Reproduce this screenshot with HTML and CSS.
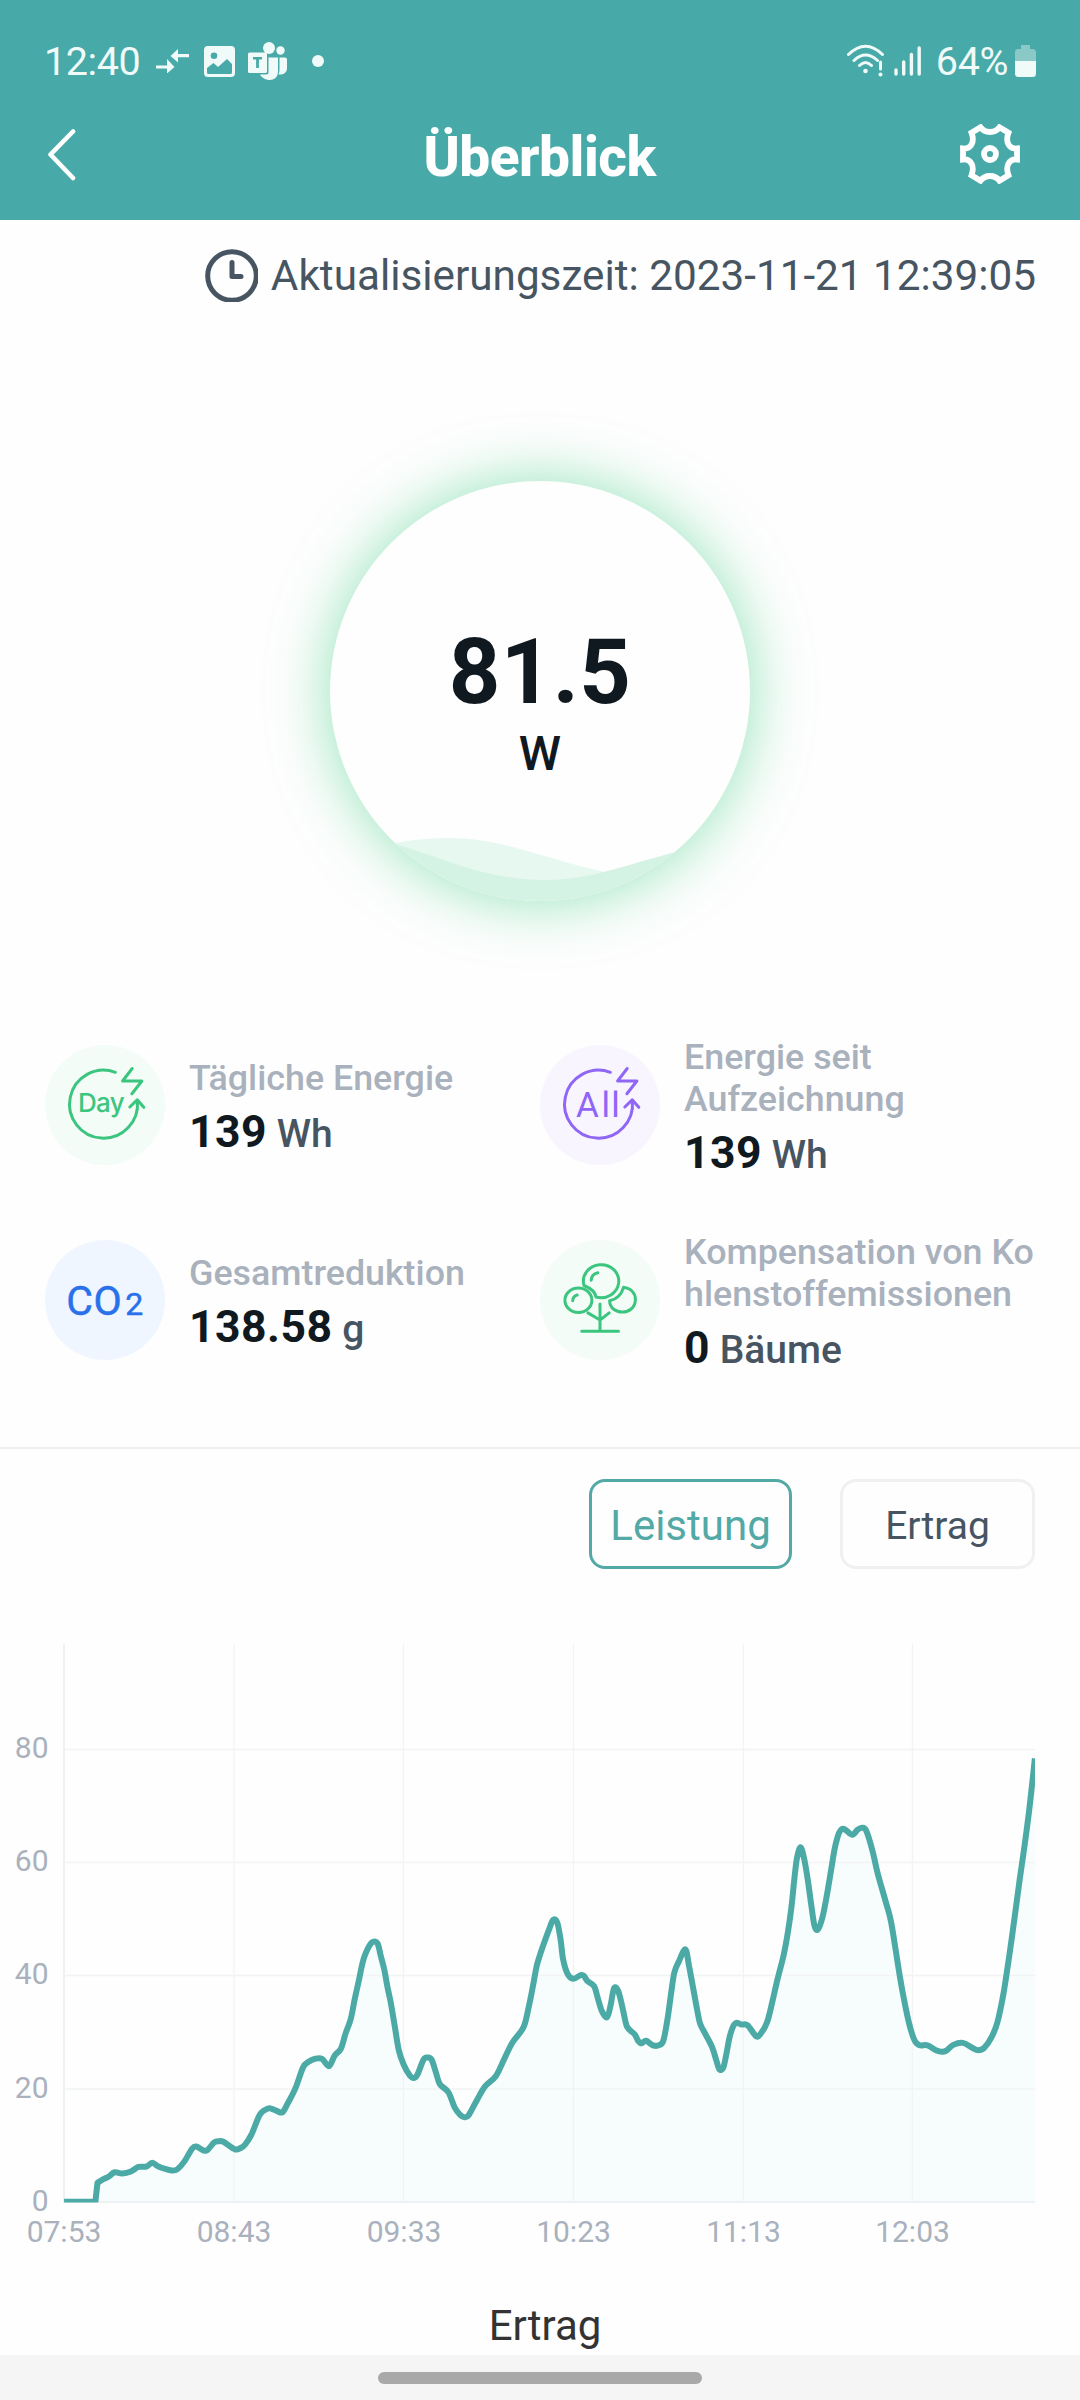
FILE: index.html
```html
<!DOCTYPE html>
<html lang="de">
<head>
<meta charset="utf-8">
<title>Überblick</title>
<link rel="stylesheet" href="styles.css">
</head>
<body>
<header class="header">
  <div class="status">
    <div class="status-left">
      <span class="clock">12:40</span>
      <svg class="i-arrows" width="33" height="24" viewBox="0 0 33 24"><path d="M0 16.500h11v-6.500l7.500 8-7.500 6.500v-5H0zM33 5H22v-5l-7.500 7 7.500 6.500V8.300h11z" fill="#effaf9"/></svg>
      <svg class="i-image" width="31" height="31" viewBox="0 0 31 31"><path fill-rule="evenodd" fill="#effaf9" d="M4 0h23a4 4 0 0 1 4 4v23a4 4 0 0 1-4 4H4a4 4 0 0 1-4-4V4a4 4 0 0 1 4-4zM10 6.500a3.300 3.300 0 1 0 0 6.600 3.300 3.300 0 0 0 0-6.600zM3 22v4.500q0 1.500 1.500 1.500h22q1.500 0 1.500-1.500V18l-5-5-9 8-4.500-4z"/></svg>
      <svg class="i-teams" width="40" height="38" viewBox="0 0 40 38"><g fill="#effaf9"><circle cx="21" cy="6" r="6"/><circle cx="32.500" cy="8.500" r="4.200"/><path d="M1.500 10.500h16a1.500 1.500 0 0 1 1.500 1.500v17.500a1.500 1.500 0 0 1-1.500 1.500h-16A1.500 1.500 0 0 1 0 29.500V12a1.500 1.500 0 0 1 1.500-1.500z"/><path d="M20.500 15.500H30v14c0 11-14 10.500-18 3h6.500a2 2 0 0 0 2-2zM31.500 15.500H37a2 2 0 0 1 2 2V26c0 5-4 7-8.500 6.500q1-2 1-5z"/></g><path d="M5 15h9v2.600h-3.100V26H8.100v-8.400H5z" fill="#48aaa8"/></svg>
      <svg class="i-dot" width="12" height="12"><circle cx="6" cy="6" r="6" fill="#effaf9"/></svg>
    </div>
    <div class="status-right">
      <svg class="i-wifi" width="37" height="34" viewBox="0 0 37 34"><g fill="none" stroke="#effaf9" stroke-width="3" stroke-linecap="round"><path d="M1.500 10.500Q18.500-6 35.500 10.500M7 16.500q11.500-11 23.500 0M12.500 21.500q6-6 12 0"/><path d="M33.500 18v7"/></g><circle cx="18.500" cy="27" r="2.300" fill="#effaf9"/><circle cx="33.500" cy="30.500" r="2" fill="#effaf9"/></svg>
      <svg class="i-signal" width="28" height="30" viewBox="0 0 28 30"><path d="M2 24v4M9.700 16v12M17.400 8.500V28M25.200 2v26" stroke="#effaf9" stroke-width="3.400" stroke-linecap="round"/></svg>
      <span class="clock">64%</span>
      <svg class="i-battery" width="21" height="32" viewBox="0 0 21 32"><path d="M6 0h9v4h2.500A3.500 3.500 0 0 1 21 7.500V16H0V7.500A3.500 3.500 0 0 1 3.500 4H6z" fill="#8bc9c7"/><path d="M0 16h21v12.500a3.500 3.500 0 0 1-3.500 3.500h-14A3.500 3.500 0 0 1 0 28.500z" fill="#effaf9"/></svg>
    </div>
  </div>
  <div class="appbar">
    <svg class="back" width="28" height="52" viewBox="0 0 28 52"><path d="M25 2.500 2.500 25.500 25 49" fill="none" stroke="#fff" stroke-width="4.600" stroke-linecap="round" stroke-linejoin="round"/></svg>
    <h1 class="title">Überblick</h1>
    <svg class="gear" width="60" height="60" viewBox="0 0 60 60"><g fill="none" stroke="#fff" stroke-width="5.800"><path d="M20.500 3.300Q24 8 30 8T39.500 3.300L48.500 8.800C45 18 49 25.500 57 24.500V35.500C49 34.500 45 42 48.500 51.200L39.500 56.700Q36 52 30 52T20.500 56.700L11.500 51.200C15 42 11 34.500 3 35.500V24.500C11 25.500 15 18 11.500 8.800Z"/><circle cx="30" cy="30" r="6"/></g></svg>
  </div>
</header>

<main>
  <div class="updated">
    <svg width="53" height="53" viewBox="0 0 53 53"><g fill="none" stroke="#475562"><circle cx="27" cy="27" r="24.300" stroke-width="5"/><path d="M27 13.500V27.500H36" stroke-width="5" stroke-linecap="round" stroke-linejoin="round"/></g></svg>
    <span>Aktualisierungszeit: 2023-11-21 12:39:05</span>
  </div>

  <section class="gauge">
    <svg class="waves" width="420" height="420" viewBox="0 0 420 420"><path d="M0 376C100 350 140 354 190 368S250 387 330 402V420H0z" fill="#e7f8f0"/><path d="M50 359C110 374 150 399 216 399C262 399 300 382 350 370V420H50z" fill="#d5f3e4"/></svg>
    <div class="power">81.5</div>
    <div class="power-unit">W</div>
  </section>

  <section class="stats">
    <div class="stat">
      <svg class="badge green" width="120" height="120" viewBox="0 0 120 120"><g class="line" stroke="#3bc57e"><path d="M70.400 27.300A34 34 0 1 0 92.400 56"/><path d="M84.800 62 92.200 54.800 98.800 62.300M87.200 23.500 77.600 36H96.900L86.900 48.700"/></g><text x="33" y="66.700" class="day">Day</text></svg>
      <div class="info"><div class="label">Tägliche Energie</div><div class="value"><b>139</b> Wh</div></div>
    </div>
    <div class="stat">
      <svg class="badge violet" width="120" height="120" viewBox="0 0 120 120"><g class="line" stroke="#8f66f6"><path d="M70.400 27.300A34 34 0 1 0 92.400 56"/><path d="M84.800 62 92.200 54.800 98.800 62.300M87.200 23.500 77.600 36H96.900L86.900 48.700"/></g><text x="36 61.500 71.200" y="71.500" class="all">All</text></svg>
      <div class="info"><div class="label">Energie seit Aufzeichnung</div><div class="value"><b>139</b> Wh</div></div>
    </div>
    <div class="stat">
      <svg class="badge blue" width="120" height="120" viewBox="0 0 120 120"><text x="21.300 48.500" y="74.600" class="co">CO</text><text x="80.300" y="75.300" class="two">2</text></svg>
      <div class="info"><div class="label">Gesamtreduktion</div><div class="value"><b>138.58</b> g</div></div>
    </div>
    <div class="stat">
      <svg class="badge green" width="120" height="120" viewBox="0 0 120 120"><g class="line" stroke="#3bc57e"><path d="M44 45.500A17.700 16.500 0 1 1 56 57Q55 50 44 45.500Z"/><path d="M51.200 40.300Q51.500 34 57.800 32.700M32.700 60.700Q33 56 37.200 55"/><ellipse cx="38.400" cy="60.300" rx="13.500" ry="12.200"/><path d="M83.500 47.300C92 48.500 95.600 54 95.400 60C94.800 76 70 76 69.600 60.700Q80.500 58.500 83.500 47.300ZM60 64V91.300M41.700 91.300H78.500M47.900 72.900 60 80 69.200 72.900"/></g></svg>
      <div class="info"><div class="label tight">Kompensation von Ko<br>hlenstoffemissionen</div><div class="value"><b>0</b> Bäume</div></div>
    </div>
  </section>

  <div class="tabs">
    <button class="tab active">Leistung</button>
    <button class="tab">Ertrag</button>
  </div>

  <svg class="chart" width="1080" height="620" viewBox="0 1640 1080 620">
    <clipPath id="plot"><rect x="64" y="1640" width="971" height="562.500"/></clipPath>
    <path id="area" fill="#f7fcfd" clip-path="url(#plot)"/>
    <g class="grid">
      <path d="M64 1749.500H1035M64 1862.500H1035M64 1975.500H1035M64 2089H1035"/>
      <path d="M234 1644V2202M403.500 1644V2202M573.500 1644V2202M743.500 1644V2202M912.500 1644V2202"/>
      <path class="axis" d="M64 1644V2202H1035"/>
    </g>
    <path id="curve" class="curve" clip-path="url(#plot)"/>
    <g class="ticks" text-anchor="end">
      <text x="48.500" y="1758">80</text><text x="48.500" y="1871">60</text><text x="48.500" y="1984">40</text><text x="48.500" y="2097.500">20</text><text x="48.500" y="2210.500">0</text>
    </g>
    <g class="ticks" text-anchor="middle">
      <text x="64" y="2241.500">07:53</text><text x="234" y="2241.500">08:43</text><text x="404" y="2241.500">09:33</text><text x="573.500" y="2241.500">10:23</text><text x="743.500" y="2241.500">11:13</text><text x="912.500" y="2241.500">12:03</text>
    </g>
  </svg>
  <h2 class="next">Ertrag</h2>
</main>
<footer class="navbar"><span class="handle"></span></footer>
<script src="chart.js"></script>
</body>
</html>
```
FILE: styles.css
```css
* { box-sizing: border-box; }
body {
  margin: 0; width: 1080px; height: 2400px; overflow: hidden;
  display: flex; flex-direction: column;
  background: #fefefe; font-family: Roboto, sans-serif; color: #475562;
}
svg { display: block; flex: none; }
.header { height: 220px; background: #48aaa8; padding-top: 30px; flex: none; }
.status { height: 62px; display: flex; justify-content: space-between; align-items: center; padding: 0 44px 0 44px; }
.status-left, .status-right { display: flex; align-items: center; }
.clock { font-size: 39.500px; line-height: 47px; color: #effaf9; letter-spacing: -0.4px; padding-top: 1px; }
.i-arrows { margin-left: 16px; }
.i-image { margin-left: 15px; }
.i-teams { margin-left: 13px; }
.i-dot { margin-left: 24px; }
.i-signal { margin: 0 14px 0 10px; }
.i-battery { margin-left: 7px; }
.appbar { height: 128px; display: flex; align-items: center; justify-content: space-between; padding: 0 60px 0 48px; }
.back { margin-bottom: 3px; margin-right: 43px; }
.gear { margin-bottom: 4px; }
.title { margin: 0; font-size: 55px; line-height: 64px; font-weight: 800; color: #fff; letter-spacing: -0.5px; padding-top: 1px; }
main { flex: 1; min-height: 0; }
.updated { height: 110px; display: flex; align-items: center; justify-content: flex-end; gap: 13px; padding-right: 44px; font-size: 42.250px; }
.gauge {
  width: 420px; height: 420px; margin: 151px auto 106px; border-radius: 50%;
  display: grid; grid-template-rows: 222px 1fr; justify-items: center;
  background: #fefefe; color: #101920;
  box-shadow: 0 0 56px 3px rgba(60, 205, 130, 0.5);
}
.waves { grid-area: 1 / 1 / 3 / 2; border-radius: 50%; }
.power { grid-area: 1 / 1; align-self: end; font-size: 90px; line-height: 106px; font-weight: 700; margin-bottom: -23px; letter-spacing: 0.4px; }
.power-unit { grid-area: 2 / 1; font-size: 48px; line-height: 56px; font-weight: 500; margin-top: 23px; }
.stats { display: grid; grid-template: 195px 195px / 495px 495px; padding: 0 45px 50px; border-bottom: 2px solid #eceeef; }
.stat { display: flex; align-items: center; gap: 24px; }
.info { padding-top: 9px; }
.badge { border-radius: 50%; }
.green { background: #f3fcf7; }
.violet { background: #f8f5ff; }
.blue { background: #f0f6ff; }
.line { fill: none; stroke-width: 3; stroke-linecap: round; stroke-linejoin: round; }
.day { font: 500 26px Inter, sans-serif; fill: #3bc57e; letter-spacing: -0.7px; }
.all { font-size: 35px; fill: #8f66f6; }
.co { font-size: 41px; fill: #2871ea; stroke: #2871ea; stroke-width: 0.5px; }
.two { font-size: 32px; fill: #2871ea; stroke: #2871ea; stroke-width: 0.5px; }
.label { font-size: 35.800px; line-height: 42px; font-weight: 500; color: #a9b1bd; }
.tight { white-space: nowrap; }
.value { margin-top: 6px; font-size: 39px; line-height: 54px; font-weight: 500; }
.value b { font-size: 44.500px; font-weight: 700; color: #101920; letter-spacing: 0.5px; }
.tabs { display: flex; justify-content: flex-end; gap: 48px; padding: 30px 45px 71px; }
.tab { height: 90px; width: 195px; padding: 3px 0 0; border: 3px solid #eff0f2; border-radius: 16px; background: none; font: 400 39px Roboto, sans-serif; color: #475562; }
.tab.active { width: 203px; border-color: #52a9a5; color: #52a9a5; font-size: 42px; }
.grid { fill: none; stroke: #f1f3f4; stroke-width: 1.300; }
.axis { stroke: #eef1f3; stroke-width: 2; }
.curve { fill: none; stroke: #4caaa6; stroke-width: 6; stroke-linejoin: round; }
.ticks { font-size: 30px; fill: #a9b1bd; }
.next { margin: 41px 0 0 10px; text-align: center; font-size: 42px; line-height: 50px; font-weight: 400; color: #333; }
.navbar { flex: none; height: 45px; background: #f5f5f5; display: flex; justify-content: center; align-items: center; }
.handle { width: 324px; height: 12px; margin-top: 1px; border-radius: 6px; background: #a9a9a9; }
```
FILE: chart.js
```js
const samples = [
  [186,1376],[230,1376],[277,1376],[283,1330],[300,1321],[315,1315],[333,1304],[355,1307],[380,1302],[402,1291],[425,1290],[442,1281],[460,1290],[480,1296],[502,1300],[516,1296],[535,1278],[558,1246],[570,1241],[592,1251],[603,1249],[622,1231],[635,1228],[650,1230],[682,1248],[700,1244],[712,1236],[730,1212],[755,1162],[778,1148],[790,1149],[805,1154],[820,1157],[835,1136],[858,1098],[880,1047],[895,1034],[915,1026],[935,1026],[955,1044],[972,1018],[990,1001],[1003,965],[1018,930],[1030,880],[1043,830],[1053,790],[1063,765],[1080,741],[1096,743],[1105,772],[1116,808],[1125,850],[1135,890],[1146,945],[1158,1005],[1172,1040],[1190,1067],[1202,1073],[1212,1065],[1230,1028],[1241,1023],[1253,1028],[1266,1060],[1277,1088],[1302,1108],[1320,1145],[1337,1164],[1348,1169],[1361,1164],[1385,1127],[1408,1094],[1440,1068],[1465,1025],[1488,986],[1520,949],[1535,900],[1547,850],[1558,800],[1567,774],
  [1580,742],[1593,712],[1606,686],[1618,692],[1628,735],[1635,782],[1648,818],[1665,830],[1686,821],[1696,823],[1705,835],[1725,848],[1736,878],[1748,910],[1763,924],[1773,895],[1783,853],[1796,862],[1810,910],[1821,948],[1843,966],[1853,982],[1863,988],[1876,982],[1896,993],[1913,993],[1926,982],[1938,930],[1948,870],[1958,815],[1971,788],[1990,758],[2000,795],[2011,845],[2023,900],[2033,940],[2048,965],[2068,998],[2080,1030],[2089,1052],[2100,1048],[2109,1015],[2118,975],[2128,948],[2138,938],[2153,942],[2171,944],[2196,971],[2210,963],[2228,935],[2243,885],[2258,830],[2276,770],[2288,715],[2298,655],[2306,590],[2314,535],[2325,508],[2336,540],[2346,590],[2355,645],[2365,700],[2375,709],[2388,680],[2401,625],[2414,560],[2424,510],[2436,473],[2445,463],[2455,465],[2475,477],[2490,465],[2503,460],[2515,467],[2533,515],[2548,570],[2568,630],[2586,685],[2599,750],[2613,825],[2626,885],[2640,940],[2655,980],[2670,993],[2693,993],[2718,1005],[2735,1009],[2748,1006],[2768,992],[2796,987],[2823,999],[2840,1005],[2858,999],[2878,975],[2896,937],[2913,870],[2926,800],[2938,730],[2950,655],[2962,580],[2974,510],[2988,420],[2998,345],[3005,290]
];
const pts = samples.map(([x, y]) => [x / 2.9037, 1640 + y / 2.45]);

// Smooth cubic path through all points; the step at sunrise stays sharp.
let d = `M${pts[0]}L${pts[2]}L${pts[3]}`;
for (let i = 3; i < pts.length - 1; i++) {
  const a = pts[Math.max(i - 1, 3)], b = pts[i], c = pts[i + 1], e = pts[Math.min(i + 2, pts.length - 1)];
  d += `C${b[0] + (c[0] - a[0]) / 6} ${b[1] + (c[1] - a[1]) / 6} ${c[0] - (e[0] - b[0]) / 6} ${c[1] - (e[1] - b[1]) / 6} ${c[0]} ${c[1]}`;
}
document.getElementById('curve').setAttribute('d', d);
document.getElementById('area').setAttribute('d', d + 'V2202H64Z');
```
